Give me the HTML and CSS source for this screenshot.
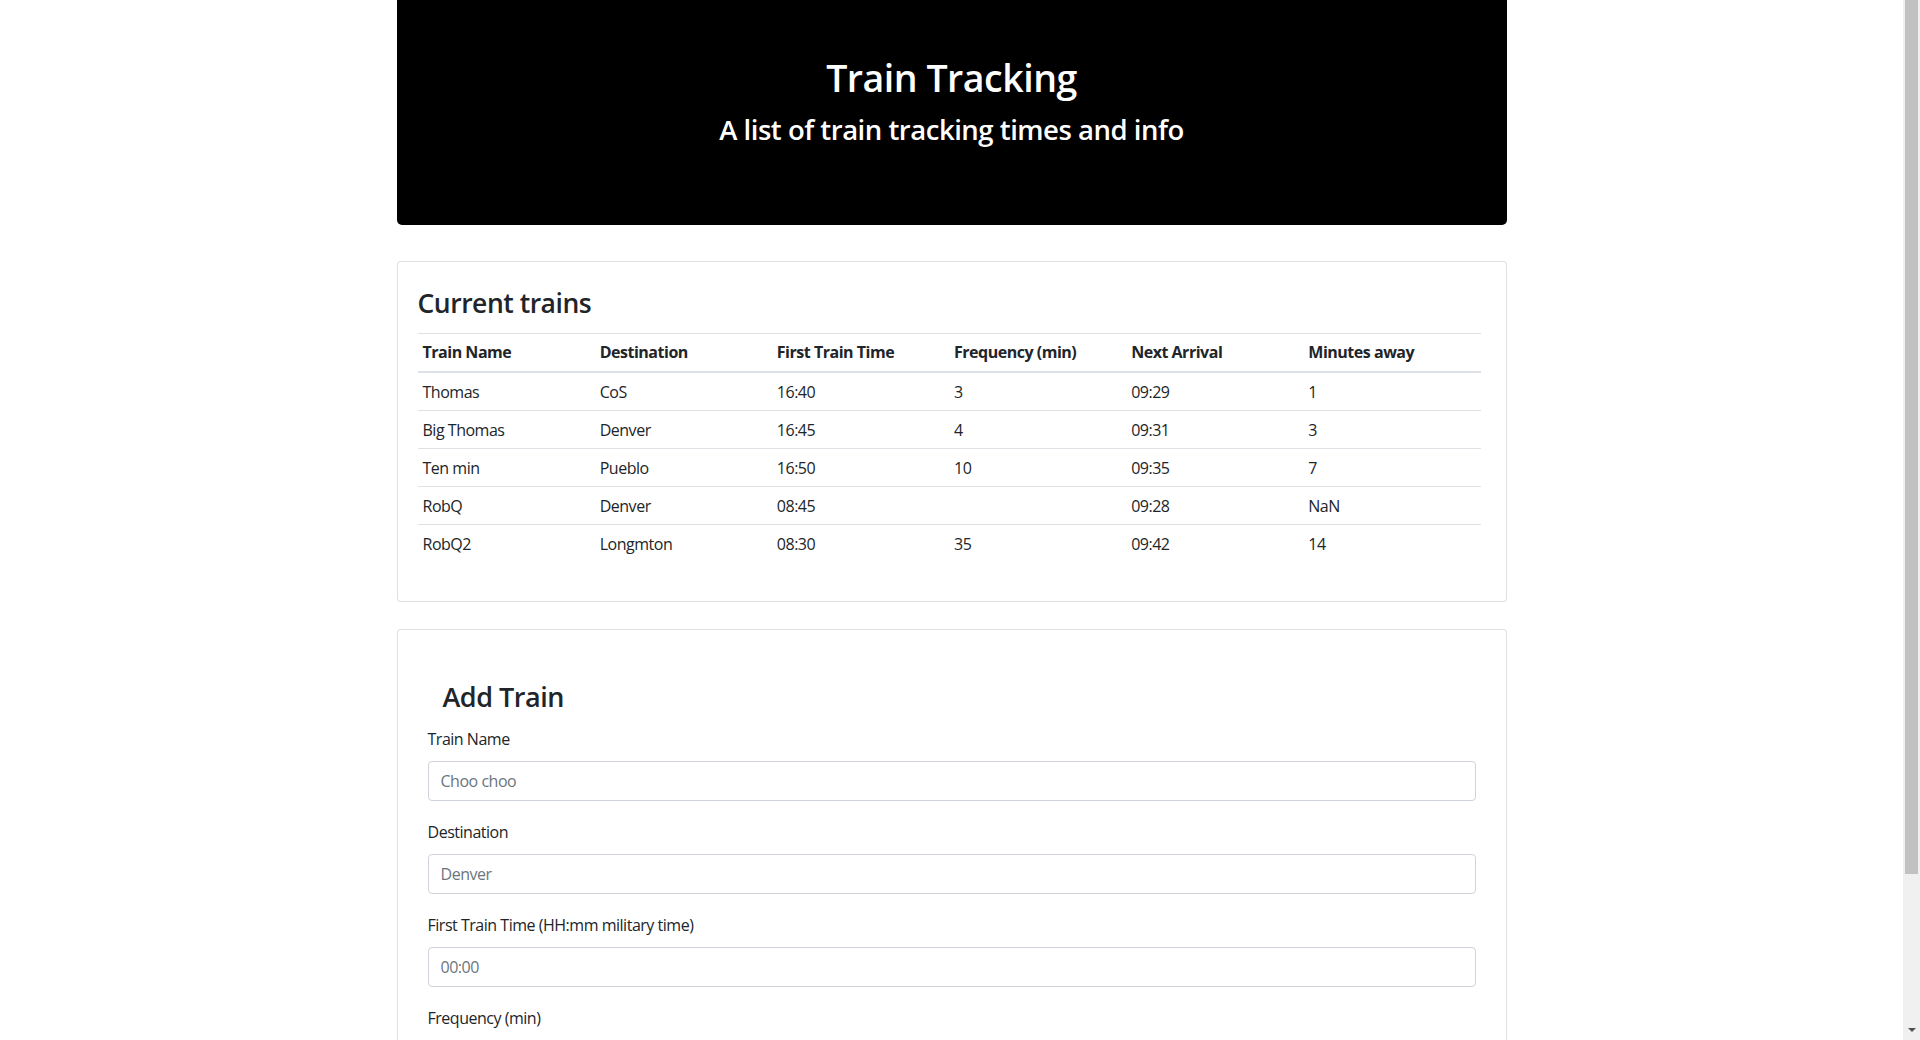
FILE: index.html
```html
<!DOCTYPE html>
<html lang="en">
<head>
<meta charset="utf-8">
<title>Train Tracking</title>
<link rel="stylesheet" href="styles.css">
</head>
<body>
<div class="container">
  <header class="jumbotron">
    <h1 class="jumbo-title">Train Tracking</h1>
    <h3 class="jumbo-sub">A list of train tracking times and info</h3>
  </header>

  <section class="card card-trains">
    <div class="card-body">
      <h3 class="card-title">Current trains</h3>
      <table class="train-table">
        <thead>
          <tr>
            <th>Train Name</th>
            <th>Destination</th>
            <th>First Train Time</th>
            <th>Frequency (min)</th>
            <th>Next Arrival</th>
            <th>Minutes away</th>
          </tr>
        </thead>
        <tbody>
          <tr><td>Thomas</td><td>CoS</td><td>16:40</td><td>3</td><td>09:29</td><td>1</td></tr>
          <tr><td>Big Thomas</td><td>Denver</td><td>16:45</td><td>4</td><td>09:31</td><td>3</td></tr>
          <tr><td>Ten min</td><td>Pueblo</td><td>16:50</td><td>10</td><td>09:35</td><td>7</td></tr>
          <tr><td>RobQ</td><td>Denver</td><td>08:45</td><td></td><td>09:28</td><td>NaN</td></tr>
          <tr><td>RobQ2</td><td>Longmton</td><td>08:30</td><td>35</td><td>09:42</td><td>14</td></tr>
        </tbody>
      </table>
    </div>
  </section>

  <section class="card card-add">
    <div class="card-body">
      <form class="add-form">
        <h3 class="form-title">Add Train</h3>
        <div class="form-group">
          <label for="trainName">Train Name</label>
          <input id="trainName" class="form-control" type="text" placeholder="Choo choo">
        </div>
        <div class="form-group">
          <label for="destination">Destination</label>
          <input id="destination" class="form-control" type="text" placeholder="Denver">
        </div>
        <div class="form-group">
          <label for="firstTime">First Train Time (HH:mm military time)</label>
          <input id="firstTime" class="form-control" type="text" placeholder="00:00">
        </div>
        <div class="form-group">
          <label for="frequency">Frequency (min)</label>
          <input id="frequency" class="form-control" type="text" placeholder="5">
        </div>
        <button type="submit" class="btn-submit">Submit</button>
      </form>
    </div>
  </section>
</div>

<div class="fake-scrollbar" aria-hidden="true">
  <div class="fake-thumb"></div>
  <div class="fake-arrow"></div>
</div>
</body>
</html>
```

FILE: styles.css
```css
html {
  background: #fff;
}

body {
  margin: 0;
  padding-right: 17px;
  font-family: "Segoe UI", "Open Sans", "Noto Sans", sans-serif;
  font-size: 16px;
  line-height: 24px;
  letter-spacing: -0.03em;
  color: #212529;
  background: #fff;
}

/* Window scrollbar drawn over the right edge */
.fake-scrollbar {
  position: fixed;
  top: 0;
  right: 0;
  width: 17px;
  height: 100vh;
  background: #f0f0f0;
}

.fake-thumb {
  position: absolute;
  top: 0;
  left: 2px;
  width: 13px;
  height: 874px;
  background: #c1c1c1;
}

.fake-arrow {
  position: absolute;
  left: 5px;
  bottom: 8px;
  width: 0;
  height: 0;
  border-left: 4px solid transparent;
  border-right: 4px solid transparent;
  border-top: 4px solid #505050;
}

.container {
  width: 1110px;
  margin: 0 auto;
  padding-bottom: 58px;
}

/* Jumbotron */
.jumbotron {
  background: #000;
  color: #fff;
  border-radius: 0 0 5px 5px;
  height: 225px;
  box-sizing: border-box;
  padding-top: 54px;
  margin-bottom: 36px;
  text-align: center;
}

.jumbo-title {
  margin: 0 0 11px;
  font-size: 37.5px;
  line-height: 48px;
  font-weight: 600;
}

.jumbo-sub {
  margin: 0;
  font-size: 27.5px;
  line-height: 33.6px;
  font-weight: 600;
}

/* Cards */
.card {
  border: 1px solid rgba(0, 0, 0, 0.125);
  border-radius: 4px;
  background: #fff;
}

.card-body {
  padding: 20px;
}

.card-trains {
  margin-bottom: 27px;
}

.card-title {
  margin: 5px 0 14px;
  font-size: 26.5px;
  line-height: 32px;
  font-weight: 600;
}

/* Table */
.train-table {
  width: 1063px;
  table-layout: fixed;
  border-collapse: collapse;
  margin-bottom: 19px;
}

.train-table th,
.train-table td {
  text-align: left;
  padding: 6.5px 5px;
  border-top: 1px solid #dee2e6;
  line-height: 24px;
  vertical-align: top;
}

.train-table th {
  padding-top: 5.5px;
  padding-bottom: 7.5px;
  font-weight: 700;
  border-bottom: 2px solid #dee2e6;
}

/* Form */
.add-form {
  margin: 0 10px;
  padding-top: 31px;
}

.form-title {
  margin: 0 0 14px;
  padding-left: 15px;
  font-size: 27px;
  line-height: 32px;
  font-weight: 600;
}

.form-group {
  margin-bottom: 19px;
}

.form-group label {
  display: block;
  margin-bottom: 10px;
  line-height: 24px;
}

.form-control {
  display: block;
  width: 100%;
  height: 40px;
  box-sizing: border-box;
  padding: 0 12px;
  font-family: inherit;
  font-size: 16px;
  letter-spacing: inherit;
  color: #495057;
  background: #fff;
  border: 1px solid #ced4da;
  border-radius: 4px;
  outline: none;
}

.form-control::placeholder {
  color: #6c757d;
}

.btn-submit {
  height: 38px;
  padding: 0 12px;
  font-family: inherit;
  font-size: 16px;
  color: #fff;
  background: #007bff;
  border: 1px solid #007bff;
  border-radius: 4px;
}
```
